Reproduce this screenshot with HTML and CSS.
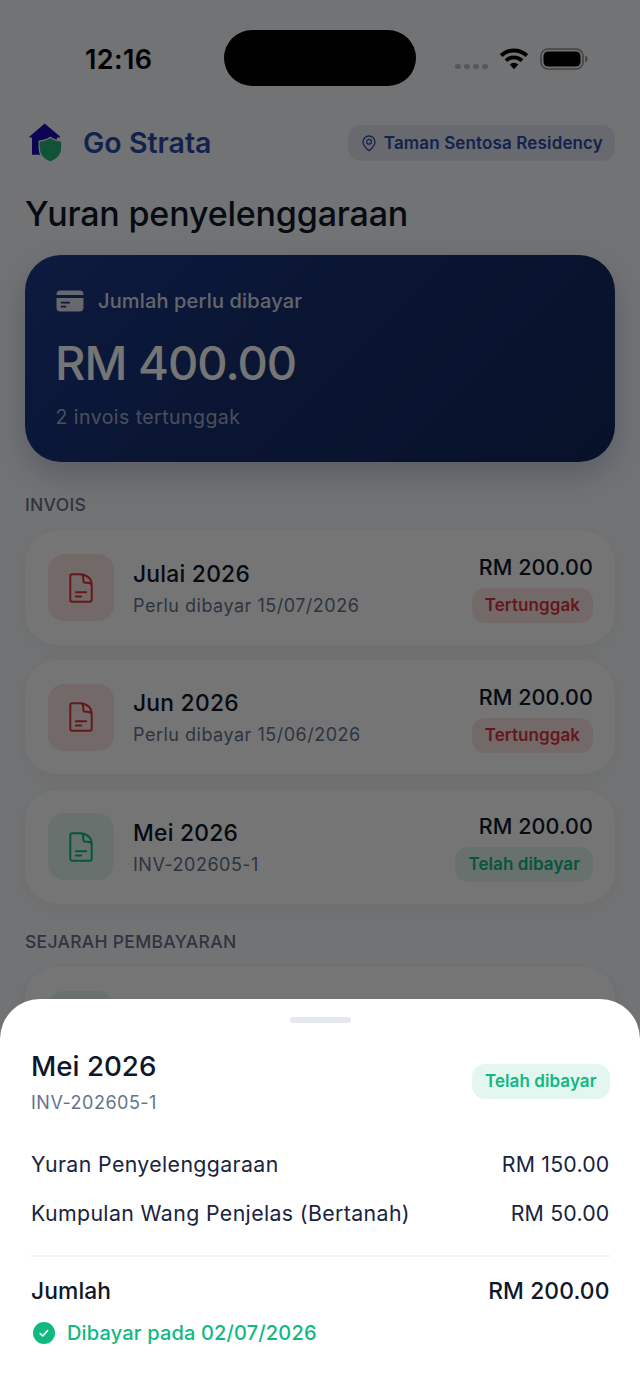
FILE: index.html
```html
<!DOCTYPE html>
<html lang="ms">
<head>
<meta charset="utf-8">
<title>Go Strata</title>
<link rel="stylesheet" href="styles.css">
</head>
<body>
<svg class="symbols" width="0" height="0">
  <symbol id="doc" viewBox="0 0 24 30">
    <path d="M3.2 1.3H12Q22.7 3 22.7 12.5V26.7Q22.7 28.7 20.7 28.7H3.2Q1.3 28.7 1.3 26.7V3.2Q1.3 1.3 3.2 1.3Z M12 1.3Q14.5 2.2 14.3 6.2V7.5Q14.3 9.7 16.5 9.7H18.5Q22.4 10 22.7 12.5 M6.8 19.3H17.2 M6.8 23.4H12.2"/>
  </symbol>
</svg>
<div class="phone">
  <div class="app">
    <div class="status">
      <div class="clock">12:16</div>
      <div class="island"></div>
      <div class="signals">
        <div class="dots"><i></i><i></i><i></i><i></i></div>
        <svg class="wifi" width="30" height="22" viewBox="0 0 30 22">
          <path d="M2.2 7.6A18.3 18.3 0 0 1 27.8 7.6" fill="none" stroke="#000" stroke-width="4"/>
          <path d="M7 12.6A11.4 11.4 0 0 1 23 12.6" fill="none" stroke="#000" stroke-width="3.7"/>
          <path d="M10.7 16.6A6.2 6.2 0 0 1 19.3 16.6L15 21.2Z"/>
        </svg>
        <svg class="battery" width="48" height="22" viewBox="0 0 48 22">
          <rect x="1" y="1" width="42" height="20" rx="7" fill="none" stroke="#000" stroke-opacity=".42" stroke-width="1.6"/>
          <rect x="3.5" y="3.5" width="37" height="15" rx="4.6"/>
          <path d="M45.3 7.5Q47.5 8.4 47.5 11T45.3 14.5Z" fill-opacity=".45"/>
        </svg>
      </div>
    </div>
    <div class="header">
      <svg class="logo" width="34" height="40" viewBox="0 0 34 40">
        <path d="M15.7 0.5L31 13.6V14.6H28V31.8H3V14.6H0.5V13.6Z" fill="#1e0bb5"/>
        <path d="M21.3 14.2C18 16.8 14 17.7 10.2 18V25C10.2 32 15 36.8 21.3 39C27.6 36.8 32.8 32 32.8 25V18C28.6 17.7 24.6 16.8 21.3 14.2Z" fill="#25b27a" stroke="#f8fafc" stroke-width="1.2"/>
      </svg>
      <div class="brand">Go Strata</div>
      <div class="place">
        <svg width="14" height="17" viewBox="0 0 14 17"><path d="M7 1C3.6 1 1 3.5 1 6.8C1 10.6 4.3 13.7 7 15.8C9.7 13.7 13 10.6 13 6.8C13 3.5 10.4 1 7 1Z"/><circle cx="7" cy="6.8" r="2.4"/></svg>
        <span>Taman Sentosa Residency</span>
      </div>
    </div>
    <h1 class="title">Yuran penyelenggaraan</h1>
    <div class="due">
      <div class="due-head">
        <svg width="28" height="22" viewBox="0 0 28 22">
          <path d="M0.5 5V4.5Q0.5 0.5 4.5 0.5H23.5Q27.5 0.5 27.5 4.5V5Z"/>
          <path fill-rule="evenodd" d="M0.5 8H27.5V17.5Q27.5 21.5 23.5 21.5H4.5Q0.5 21.5 0.5 17.5ZM4.8 11.7V13.5H14V11.7ZM4.8 15.8V17.6H10.2V15.8Z"/>
        </svg>
        <span>Jumlah perlu dibayar</span>
      </div>
      <div class="due-sum">RM 400.00</div>
      <div class="due-note">2 invois tertunggak</div>
    </div>
    <h2 class="section">INVOIS</h2>
    <div class="list">
      <div class="row">
        <div class="tile late"><svg width="24" height="30"><use href="#doc"/></svg></div>
        <div class="info"><div class="name">Julai 2026</div><div class="sub">Perlu dibayar 15/07/2026</div></div>
        <div class="side"><div class="sum">RM 200.00</div><div class="badge late">Tertunggak</div></div>
      </div>
      <div class="row">
        <div class="tile late"><svg width="24" height="30"><use href="#doc"/></svg></div>
        <div class="info"><div class="name">Jun 2026</div><div class="sub">Perlu dibayar 15/06/2026</div></div>
        <div class="side"><div class="sum">RM 200.00</div><div class="badge late">Tertunggak</div></div>
      </div>
      <div class="row">
        <div class="tile paid"><svg width="24" height="30"><use href="#doc"/></svg></div>
        <div class="info"><div class="name">Mei 2026</div><div class="sub">INV-202605-1</div></div>
        <div class="side"><div class="sum">RM 200.00</div><div class="badge paid">Telah dibayar</div></div>
      </div>
    </div>
    <h2 class="section history">SEJARAH PEMBAYARAN</h2>
    <div class="list"><div class="row"><div class="tile paid"></div></div></div>
  </div>
  <div class="scrim"></div>
  <div class="sheet">
    <div class="handle"></div>
    <div class="sheet-head">
      <div><div class="sheet-name">Mei 2026</div><div class="sub">INV-202605-1</div></div>
      <div class="badge paid">Telah dibayar</div>
    </div>
    <div class="line"><span>Yuran Penyelenggaraan</span><span>RM 150.00</span></div>
    <div class="line"><span>Kumpulan Wang Penjelas (Bertanah)</span><span>RM 50.00</span></div>
    <div class="total"><span>Jumlah</span><span>RM 200.00</span></div>
    <div class="settled">
      <svg width="22" height="22" viewBox="0 0 22 22"><circle cx="11" cy="11" r="11" fill="#10b981"/><path d="M7.2 11.6L9.8 14L14.6 8.5" fill="none" stroke="#fff" stroke-width="1.6" stroke-linecap="round" stroke-linejoin="round"/></svg>
      <span>Dibayar pada 02/07/2026</span>
    </div>
  </div>
</div>
</body>
</html>
```
FILE: styles.css
```css
* { box-sizing: border-box; }
body { margin: 0; font-family: Inter, "Liberation Sans", sans-serif; color: #0f172a; }
svg { display: block; flex: none; }
.symbols { position: absolute; }
.phone { position: relative; width: 640px; height: 1390px; overflow: hidden; background: #f8fafc; }
.app { padding: 0 25px; }
.scrim { position: absolute; inset: 0; background: rgba(0, 0, 0, .54); }

.status { display: grid; grid-template-columns: 199px 192px 1fr; height: 118px; align-items: start; padding-top: 30px; }
.clock { padding-left: 60px; font-size: 27px; font-weight: 600; line-height: 59px; letter-spacing: .4px; color: #000; }
.island { height: 56px; border-radius: 28px; background: #000; }
.signals { display: flex; align-items: center; height: 57px; padding-left: 39px; }
.dots { display: flex; gap: 3.5px; padding-top: 16px; margin-right: 11px; }
.dots i { width: 5.6px; height: 5.6px; border-radius: 50%; background: #c0c1c4; }
.wifi { margin-right: 11px; }

.header { display: flex; align-items: center; height: 50px; padding-left: 4px; }
.brand { margin-left: 20px; font-size: 28.5px; font-weight: 600; line-height: 36px; margin-bottom: 1px; color: #2b4aa8; }
.place { display: flex; align-items: center; gap: 8px; margin-left: auto; height: 36px; padding: 0 12px 0 14px; border-radius: 13px; background: #e4e8f4; color: #2b4aa8; font-size: 17px; font-weight: 600; letter-spacing: .14px; }
.place svg { fill: none; stroke: #2b4aa8; stroke-width: 1.3; }
.title { margin: 22px 0 0; font-size: 34px; font-weight: 500; line-height: 48px; letter-spacing: -.18px; }

.due { margin-top: 16.5px; height: 207px; padding: 32px 31px; border-radius: 36px; background: linear-gradient(135deg, #1e3a8a, #172f70 45%, #11275a); box-shadow: 0 13px 33px rgba(30, 58, 138, .25); color: #fff; }
.due-head { display: flex; align-items: center; gap: 14px; height: 28px; color: rgba(255, 255, 255, .85); font-size: 20px; font-weight: 500; letter-spacing: .15px; }
.due-head svg { fill: #dfe3ee; }
.due-sum { margin-top: 18px; font-size: 47px; font-weight: 500; line-height: 60px; letter-spacing: -.95px; margin-left: -1px; }
.due-note { margin-top: 10px; font-size: 19.5px; line-height: 28px; color: rgba(255, 255, 255, .6); letter-spacing: .45px; margin-left: -.5px; }

.section { margin: 31.5px 0 0; font-size: 17.5px; font-weight: 500; line-height: 24px; letter-spacing: .3px; color: #64748b; }
.section.history { margin-top: 26px; }
.list { display: grid; gap: 15.3px; margin-top: 13.5px; }
.row { display: flex; align-items: center; height: 114.3px; padding: 0 22px 0 23px; border-radius: 32px; background: #fff; box-shadow: 0 4px 20px rgba(15, 23, 42, .06); }
.tile { display: grid; place-items: center; flex: none; width: 66px; height: 67px; border-radius: 16px; }
.tile svg { fill: none; stroke: currentColor; stroke-width: 2; stroke-linecap: round; stroke-linejoin: round; }
.late { background: #fbe5e5; color: #d9363e; }
.paid { background: #e3f6f0; color: #10b981; }
.info { margin-left: 19px; padding-top: 4px; }
.name { font-size: 22.8px; font-weight: 500; line-height: 32px; letter-spacing: .25px; }
.sub { font-size: 18px; line-height: 32px; letter-spacing: .5px; color: #64748b; }
.side { margin-left: auto; display: flex; flex-direction: column; align-items: flex-end; margin-top: -1px; }
.sum { font-size: 21.5px; font-weight: 500; line-height: 32px; margin-bottom: 5px; letter-spacing: .1px; }
.badge { height: 35px; padding: 0 13px; border-radius: 13px; font-size: 17px; font-weight: 600; line-height: 34px; letter-spacing: .08px; }

.sheet { position: absolute; left: 0; right: 0; top: 998.5px; bottom: 0; padding: 18px 30.5px 0 31px; border-radius: 40px 40px 0 0; background: #fff; }
.handle { width: 61px; height: 6px; margin: 0 auto; border-radius: 3px; background: #e5e7f1; }
.sheet-head { display: flex; justify-content: space-between; align-items: center; margin-top: 24.5px; }
.sheet-head .badge { margin-top: -3px; }
.sheet-name { font-size: 27.7px; font-weight: 500; line-height: 38px; margin-bottom: 2px; }
.line { display: flex; justify-content: space-between; font-size: 21.3px; line-height: 30px; letter-spacing: .38px; margin-top: 18.7px; color: #1a2340; }
.line span:last-child { letter-spacing: .2px; }
.sheet-head + .line { margin-top: 30px; }
.total { display: flex; justify-content: space-between; margin-top: 27.3px; padding-top: 18.5px; border-top: 2px solid #f1f4f8; font-size: 22.8px; font-weight: 500; line-height: 32px; letter-spacing: .12px; }
.settled { display: flex; align-items: center; gap: 12px; height: 30px; margin-top: 11px; padding-left: 2px; color: #10b981; font-size: 20px; font-weight: 500; letter-spacing: .16px; }
```
